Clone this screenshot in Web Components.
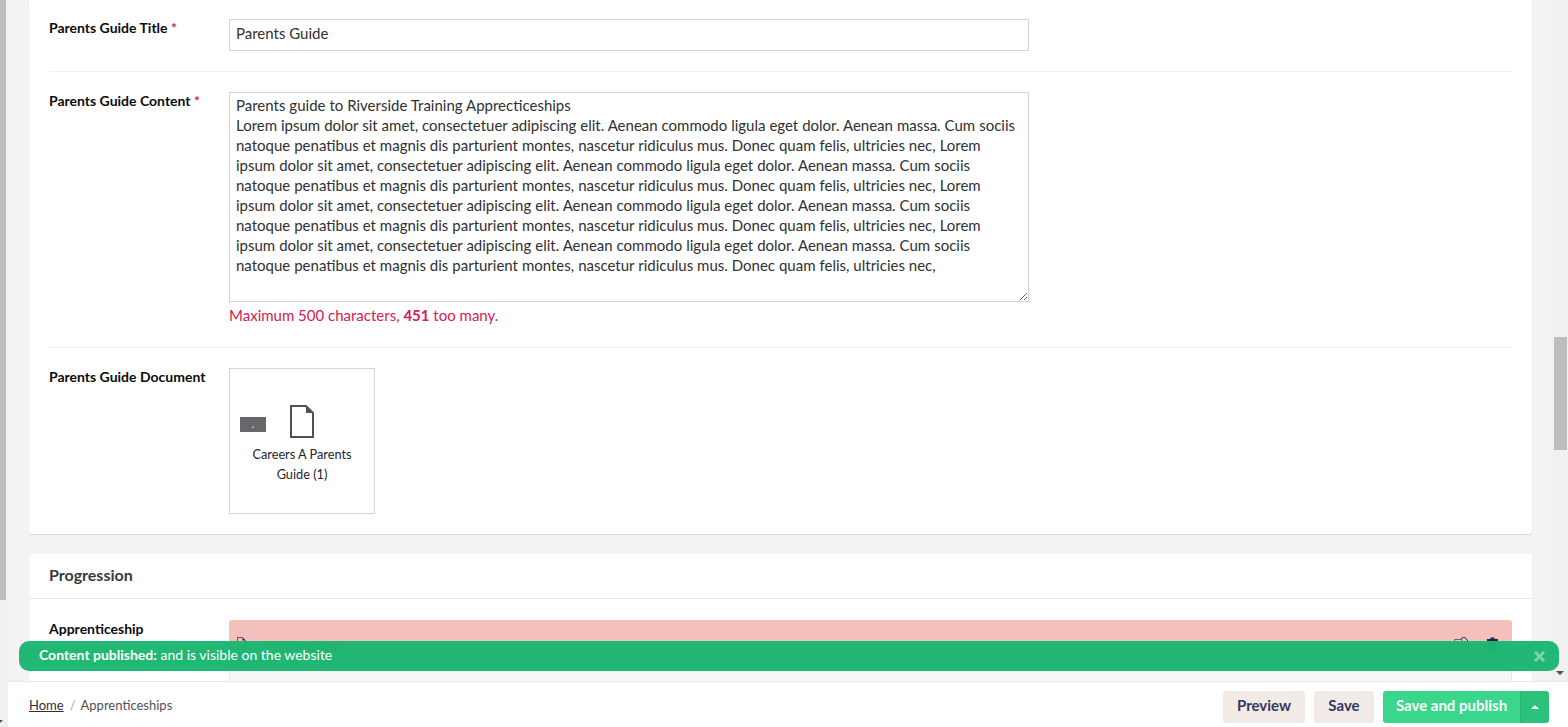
<!DOCTYPE html>
<html lang="en"><head><meta charset="utf-8"><title>Apprenticeships</title>
<style>
html,body{margin:0;padding:0;height:100%;overflow:hidden;background:#f4f2f2;font-family:Lato,"Open Sans",sans-serif;}
</style></head><body>
<app-shell>
  <app-card>
    <app-row label="Parents Guide Title" required first><app-input>Parents Guide</app-input></app-row>
    <app-row label="Parents Guide Content" required>
      <app-textarea>Parents guide to Riverside Training Apprecticeships<br>Lorem ipsum dolor sit amet, consectetuer adipiscing elit. Aenean commodo ligula eget dolor. Aenean massa. Cum sociis<br>natoque penatibus et magnis dis parturient montes, nascetur ridiculus mus. Donec quam felis, ultricies nec, Lorem<br>ipsum dolor sit amet, consectetuer adipiscing elit. Aenean commodo ligula eget dolor. Aenean massa. Cum sociis<br>natoque penatibus et magnis dis parturient montes, nascetur ridiculus mus. Donec quam felis, ultricies nec, Lorem<br>ipsum dolor sit amet, consectetuer adipiscing elit. Aenean commodo ligula eget dolor. Aenean massa. Cum sociis<br>natoque penatibus et magnis dis parturient montes, nascetur ridiculus mus. Donec quam felis, ultricies nec, Lorem<br>ipsum dolor sit amet, consectetuer adipiscing elit. Aenean commodo ligula eget dolor. Aenean massa. Cum sociis<br>natoque penatibus et magnis dis parturient montes, nascetur ridiculus mus. Donec quam felis, ultricies nec,</app-textarea>
      <app-hint>Maximum 500 characters, <b>451</b> too many.</app-hint>
    </app-row>
    <app-row label="Parents Guide Document"><app-file>Careers A Parents Guide (1)</app-file></app-row>
  </app-card>
  <app-card heading="Progression">
    <app-row label="Apprenticeship" style="padding-top:21px"><app-block>Progression</app-block></app-row>
  </app-card>
  <app-toast slot="overlay"><b>Content published:</b> and is visible on the website</app-toast>
  <app-footer slot="footer"></app-footer>
</app-shell>
<script>
function def(name, css, html){
  customElements.define(name, class extends HTMLElement{
    constructor(){super();const r=this.attachShadow({mode:'open'});
      r.innerHTML='<style>'+css+'</style>'+(typeof html==='function'?html(this):html);}
  });
}
def('app-shell',`
  :host{display:grid;grid-template-columns:8px 1fr 16px;grid-template-rows:681px 46px;width:1568px;height:727px;position:relative;overflow:hidden}
  .lbar{grid-column:1;grid-row:1/3;background:#f0f0f0;display:flex;flex-direction:column}
  .lthumb{width:6px;height:600px;background:#bdbdbd}
  .larrow{margin-top:auto;margin-bottom:4px;width:0;height:0;border-left:3px solid transparent;border-right:3px solid transparent;border-top:3px solid #505050;margin-left:-3px}
  main{grid-column:2;grid-row:1;overflow:hidden;background:#f4f2f2;padding:0 20px 0 21px;display:flex;flex-direction:column;gap:20px;min-width:0}
  .rbar{grid-column:3;grid-row:1;background:#f0f0f0;display:flex;flex-direction:column;align-items:center}
  .rthumb{width:13px;height:113px;margin:337px 0 0 1px;background:#bdbdbd}
  .rarrow{margin-top:auto;margin-bottom:6px;width:0;height:0;border-left:4px solid transparent;border-right:4px solid transparent;border-top:4px solid #505050}
  .foot{grid-column:2/4;grid-row:2;min-width:0}
`,`<div class="lbar"><div class="lthumb"></div><div class="larrow"></div></div>
<main><slot></slot></main>
<div class="rbar"><div class="rthumb"></div><div class="rarrow"></div></div>
<div class="foot"><slot name="footer"></slot></div>
<slot name="overlay"></slot>`);

def('app-card',`
  :host{display:block;flex:none;background:#fff;border-radius:0 0 3px 3px;box-shadow:0 1px 1px rgba(0,0,0,.12);}
  :host([heading]){border-radius:3px}
  header{height:45px;box-sizing:border-box;border-bottom:1px solid #e9e9eb;padding:0 20px 4px;display:flex;align-items:center;font-size:16px;font-weight:700;color:#3a3a3e}
  .body{padding:0 20px}
`,el=>(el.getAttribute('heading')?`<header>${el.getAttribute('heading')}</header>`:'')+`<div class="body"><slot></slot></div>`);

def('app-row',`
  :host{display:grid;grid-template-columns:180px 1fr;padding:20px 0;border-bottom:1px solid #f1f1f1}
  :host([first]){padding-top:19px}
  :host(:last-child){border-bottom:0}
  .label{font-size:14px;font-weight:700;color:#0b0b0b;line-height:20px;margin-top:-1px}
  .req{color:#d42054;font-weight:700;position:relative;top:0}
  .field{min-width:0;display:flex;flex-direction:column}
`,el=>`<div class="label">${el.getAttribute('label')}${el.hasAttribute('required')?' <span class="req">*</span>':''}</div><div class="field"><slot></slot></div>`);

def('app-input',`
  :host{display:flex;align-items:center;box-sizing:border-box;width:800px;height:32px;border:1px solid #d5d5d5;padding:0 6px 5px;font-size:15px;color:#303033;background:#fff}
`,`<slot></slot>`);

def('app-textarea',`
  :host{display:block;box-sizing:border-box;width:800px;height:210px;border:1px solid #d5d5d5;padding:2px 6px;font-size:15px;line-height:20px;word-spacing:.1px;color:#303033;background:#fff;overflow:hidden;resize:both;white-space:nowrap}
`,`<slot></slot>`);

def('app-hint',`
  :host{display:block;margin-top:3px;margin-bottom:2px;font-size:15px;line-height:20px;color:#d42054}
`,`<slot></slot>`);

def('app-file',`
  :host{display:flex;box-sizing:border-box;width:146px;height:146px;border:1px solid #d5d5d5;background:#fff;flex-direction:column;align-items:center;position:relative;padding-top:36px}
  .tag{position:absolute;left:10px;top:48px;width:26px;height:15px;background:#68676b;display:flex;align-items:center;justify-content:center;color:#fff;font-size:9px;font-weight:700;line-height:15px}
  svg{display:block;width:24px;height:33px;margin-bottom:6px}
  .name{width:112px;text-align:center;font-size:12.75px;line-height:20px;color:#23242e}
`,`<span class="tag">.</span>
<svg viewBox="0 0 24 33" fill="none"><path d="M1 1H16L23 8V32H1Z" fill="#fff" stroke="#515054" stroke-width="2"/><path d="M16 1V8H23Z" fill="#515054"/></svg>
<div class="name"><slot></slot></div>`);

def('app-block',`
  :host{display:block;position:relative;height:120px;margin-bottom:-60px}
  .head{height:46px;background:#f4c0bb;border-radius:3px 3px 0 0;display:flex;align-items:center;padding:0 14px 0 8px;box-sizing:border-box;font-size:15px;color:#1b264f}
  .head svg{flex:none;margin-top:1px}
  .t{margin-left:19px;flex:1;padding-top:5px}
  .rest{height:74px;background:#f7f7f7;border:1px solid #e9e9eb;border-top:0;box-sizing:border-box}
`,`<div class="head">
<svg width="9" height="13" viewBox="0 0 9 13" fill="none"><path d="M.5 .5H5.5L8.5 3.500V12.500H.5Z" stroke="#5b4f72"/><path d="M5.5 .5V3.500H8.500Z" fill="#1b264f"/></svg>
<span class="t"><slot></slot></span>
<svg width="15" height="13" viewBox="0 0 15 13" fill="none" style="margin-right:18px"><path d="M.5 2.5H8V12.500H.5Z" stroke="#6b5f80"/><path d="M7 2C8 0 11 0 12 1.500L14.500 5V11H9" stroke="#1b264f"/></svg>
<svg width="11" height="13" viewBox="0 0 11 13"><path d="M3.500 2V.5H7.500V2H11V4H0V2ZM1 5H10L9.300 13H1.700Z" fill="#1b264f"/></svg>
</div><div class="rest"></div>`);

def('app-toast',`
  :host{position:absolute;left:19px;top:641px;width:1540px;height:30px;box-sizing:border-box;background:rgba(29,182,114,.98);border-radius:10px;color:#fff;font-size:14px;display:flex;align-items:center;padding:0 20px 3px;}
  .txt{flex:1}
  ::slotted(b){font-weight:700}
  .x{width:11px;height:11px;opacity:.4;margin:3px -6px 0 auto}
`,`<span class="txt"><slot></slot></span><svg class="x" viewBox="0 0 11 11"><path d="M1 1L10 10M10 1L1 10" stroke="#fff" stroke-width="3"/></svg>`);

def('app-button',`
  :host{display:inline-flex;align-items:center;justify-content:center;box-sizing:border-box;height:32px;width:var(--w);border-radius:3px;padding:0 0 5px;font-size:15px;font-weight:700;color:#303a60;background:#f1eae7;white-space:nowrap}
  :host([primary]){background:#3ad68b;color:#fff}
`,`<slot></slot>`);

def('app-footer',`
  :host{display:flex;align-items:center;height:46px;box-sizing:border-box;background:#fff;border-top:1px solid #e9e9eb;padding:9px 19px 4px 21px}
  nav{font-size:13px;color:#515054;display:flex;align-items:center;flex:1;padding-bottom:5px}
  a{color:#303033;text-decoration:underline;}
  .sep{color:#a2a1a6;margin:0 5px 0 6px}
  .acts{display:flex;gap:9px}
  .group{display:flex}
  .group app-button{border-radius:3px 0 0 3px}
  .caret{width:29px;height:32px;box-sizing:border-box;background:#2bc37c;border-left:1px solid #27b272;border-radius:0 3px 3px 0;display:flex;align-items:center;justify-content:center}
  .caret i{width:0;height:0;border-left:4px solid transparent;border-right:4px solid transparent;border-bottom:4px solid #fff}
`,`<nav><a>Home</a><span class="sep">/</span><span>Apprenticeships</span></nav>
<div class="acts"><app-button style="--w:82px">Preview</app-button><app-button style="--w:60px">Save</app-button>
<div class="group"><app-button primary style="--w:137px">Save and publish</app-button><div class="caret"><i></i></div></div></div>`);
</script>
</body></html>
